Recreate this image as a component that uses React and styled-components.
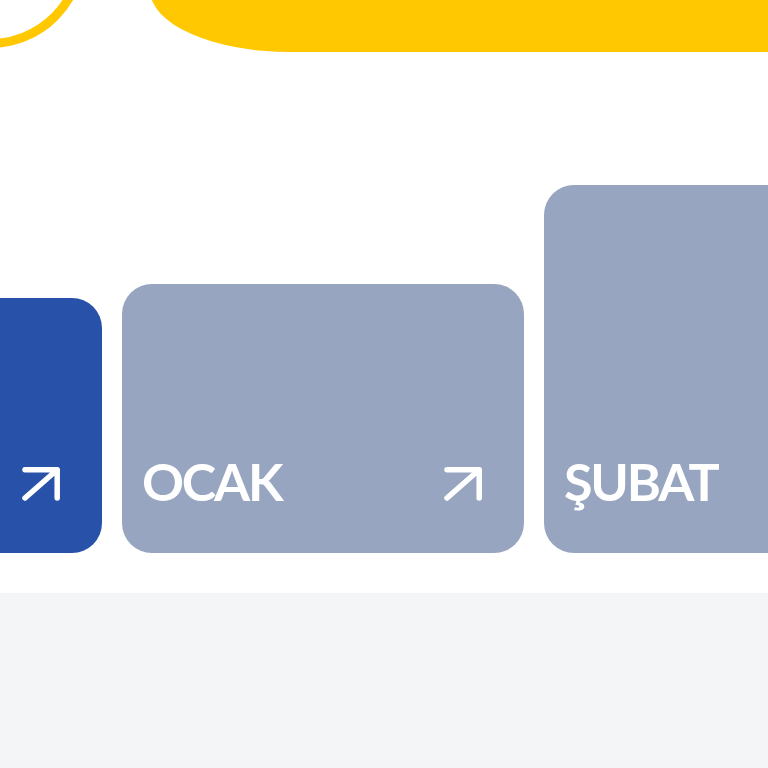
import styled, { createGlobalStyle } from "styled-components";

const GlobalStyle = createGlobalStyle`
  html, body {
    margin: 0;
    padding: 0;
    background: #f4f5f7;
    font-family: "Lato", "Noto Sans", sans-serif;
  }
`;

const Section = styled.section`
  height: 593px;
  box-sizing: border-box;
  background: #ffffff;
  overflow: hidden;
  box-shadow: 0 5px 16px rgba(20, 30, 60, 0.09);
  position: relative;
`;

const Header = styled.div`
  display: flex;
  align-items: flex-start;
  height: 52px;
`;

const Ring = styled.div`
  flex-shrink: 0;
  width: 192px;
  height: 192px;
  box-sizing: border-box;
  margin: -144px 0 0 -106px;
  border: 9px solid #ffc800;
  border-radius: 50%;
`;

// the banner starts above the page, so its wide corner keeps its shape
const Banner = styled.div`
  flex: 1;
  height: 80px;
  margin: -28px -60px 0 64px;
  background: #ffc800;
  border-bottom-left-radius: 140px 62px;
`;

const Cards = styled.div`
  display: flex;
  align-items: flex-end;
  gap: 20px;
  margin: 133px 0 0 -300px;
`;

const Card = styled.a`
  flex-shrink: 0;
  width: 402px;
  height: ${(p) => p.$height}px;
  box-sizing: border-box;
  display: flex;
  align-items: flex-end;
  justify-content: space-between;
  padding: 0 42px 46px 20px;
  border-radius: 30px;
  background: ${(p) => (p.$active ? "#2852aa" : "#97a5c0")};
  color: #ffffff;
  text-decoration: none;
`;

const Label = styled.span`
  font-size: 52px;
  font-weight: 700;
  line-height: 1;
  letter-spacing: -2.2px;
`;

const Arrow = styled.svg`
  display: block;
  flex-shrink: 0;
  margin-bottom: 6px;
`;

const ArrowIcon = () => (
  <Arrow width="38" height="34" viewBox="0 0 38 34" fill="none">
    <path
      d="M3 2.8H35.2V31M35.2 2.8L3 31"
      stroke="#ffffff"
      strokeWidth="5.5"
      strokeLinecap="round"
      strokeLinejoin="round"
    />
  </Arrow>
);

const months = [
  { name: "ARALIK", height: 255, active: true },
  { name: "OCAK", height: 269 },
  { name: "ŞUBAT", height: 368 },
];

const App = () => {
  return (
    <>
      <GlobalStyle />
      <Section>
        <Header>
          <Ring />
          <Banner />
        </Header>
        <Cards>
          {months.map((m) => (
            <Card key={m.name} href="#" $height={m.height} $active={m.active}>
              <Label>{m.name}</Label>
              <ArrowIcon />
            </Card>
          ))}
        </Cards>
      </Section>
    </>
  );
};

export default App;
